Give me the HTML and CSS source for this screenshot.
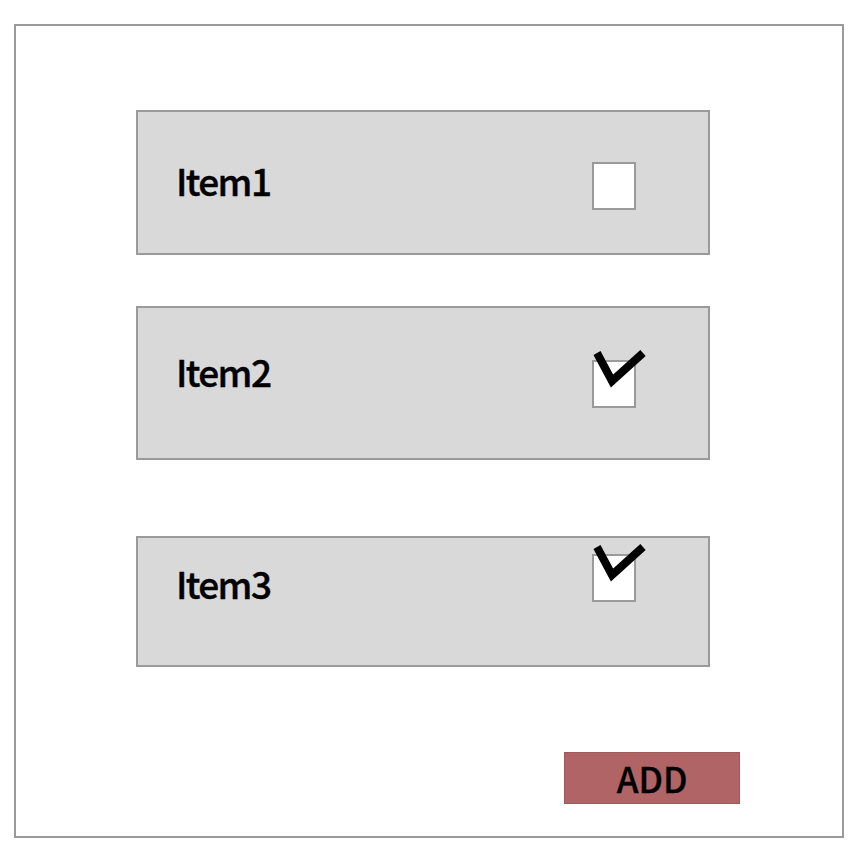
FILE: index.html
```html
<!DOCTYPE html>
<html lang="ko">
<head>
<meta charset="utf-8">
<title>Items</title>
<link rel="stylesheet" href="styles.css">
</head>
<body>
<div class="frame">
  <div class="item item-1">
    <span class="label">Item1</span>
    <span class="checkbox"></span>
  </div>
  <div class="item item-2">
    <span class="label">Item2</span>
    <span class="checkbox">
      <svg class="check" viewBox="0 0 60 50" width="60" height="50"><polyline points="5,9 20,37 51,9" fill="none" stroke="#000" stroke-width="8" stroke-linejoin="miter"/></svg>
    </span>
  </div>
  <div class="item item-3">
    <span class="label">Item3</span>
    <span class="checkbox">
      <svg class="check" viewBox="0 0 60 50" width="60" height="50"><polyline points="5,9 20,37 51,9" fill="none" stroke="#000" stroke-width="8" stroke-linejoin="miter"/></svg>
    </span>
  </div>
  <button class="add">ADD</button>
</div>
</body>
</html>
```
FILE: styles.css
```css
* { box-sizing: border-box; }
html, body { margin: 0; padding: 0; background: #fff; }
body {
  width: 858px;
  height: 852px;
  padding: 24px 0 0 14px;
  font-family: "Noto Sans CJK KR", "Noto Sans", sans-serif;
}
.frame {
  width: 830px;
  height: 814px;
  border: 2px solid #9a9a9a;
  background: #fff;
  display: flex;
  flex-direction: column;
  padding: 84px 0 0 120px;
}
.item {
  width: 574px;
  background: #d9d9d9;
  border: 2px solid #9a9a9a;
  display: flex;
  align-items: flex-start;
  padding-left: 38px;
  padding-right: 72px;
}
.item-1 { height: 145px; --label-top: 49px; --box-top: 50px; }
.item-2 { height: 154px; margin-top: 51px; --label-top: 44px; --box-top: 52px; }
.item-3 { height: 131px; margin-top: 76px; --label-top: 26px; --box-top: 16px; }
.label {
  margin-top: var(--label-top);
  font-size: 37px;
  line-height: 38px;
  font-weight: 500;
  letter-spacing: -1.6px;
  color: #000;
  -webkit-text-stroke: 0.4px #000;
}
.checkbox {
  position: relative;
  margin-left: auto;
  margin-top: var(--box-top);
  width: 44px;
  height: 48px;
  background: #fff;
  border: 2px solid #9a9a9a;
}
.check {
  position: absolute;
  left: -2px;
  top: -18px;
  display: block;
}
.add {
  margin-top: 85px;
  margin-left: 428px;
  width: 176px;
  height: 52px;
  background: #b06466;
  border: 1px solid #a05a5c;
  padding: 0;
  font-family: "Noto Sans CJK KR", "Noto Sans", sans-serif;
  font-size: 35px;
  line-height: 48px;
  font-weight: 500;
  color: #000;
  -webkit-text-stroke: 0.3px #000;
}
```
